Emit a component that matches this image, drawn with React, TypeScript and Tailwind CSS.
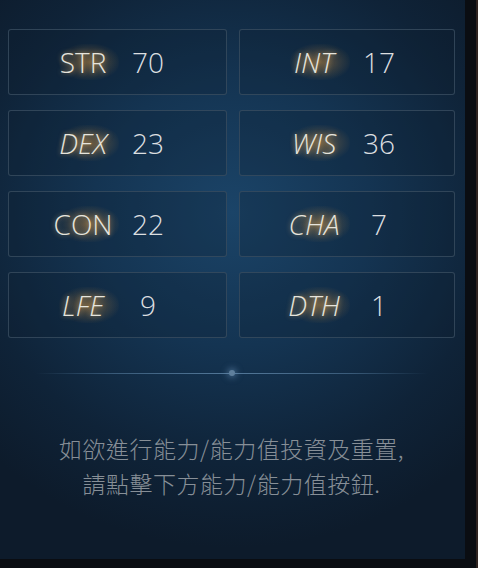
const stats = [
  { label: "STR", value: "70", italic: false },
  { label: "INT", value: "17", italic: true },
  { label: "DEX", value: "23", italic: true },
  { label: "WIS", value: "36", italic: true },
  { label: "CON", value: "22", italic: false },
  { label: "CHA", value: "7", italic: true },
  { label: "LFE", value: "9", italic: true },
  { label: "DTH", value: "1", italic: true },
];

function StatCard({ label, value, italic }: { label: string; value: string; italic: boolean }) {
  return (
    <div className="flex h-[66px] items-center rounded-[3px] border border-[#3a4d60]/80 bg-[#0a1a2b]/25 pl-[34px]">
      <div className="relative flex w-[80px] justify-center">
        <div className="absolute left-[58%] top-1/2 h-[36px] w-[60px] -translate-x-1/2 -translate-y-1/2 rounded-full bg-[radial-gradient(ellipse_at_center,rgba(200,140,60,0.5)_0%,rgba(200,140,60,0.18)_45%,rgba(200,140,60,0)_75%)]" />
        <span
          className={`relative text-[28px] font-light leading-none text-[#e6e4dc] [text-shadow:0_0_5px_rgba(255,205,130,0.5)] ${
            italic ? "italic" : ""
          }`}
        >
          {label}
        </span>
      </div>
      <span className="w-[50px] text-center text-[28px] font-light leading-none text-[#dcdfe0]">{value}</span>
    </div>
  );
}

export default function App() {
  return (
    <div className="flex h-[568px] w-[478px] bg-[#0a0d12] font-['Open_Sans','Noto_Sans',sans-serif]">
      <div className="flex h-[559px] w-[465px] flex-col bg-[radial-gradient(ellipse_75%_60%_at_50%_38%,#1b4468_0%,#143452_40%,#0f2338_75%,#0d1b2b_100%)] pl-[8px] pr-[10px] pt-[29px]">
        <div className="grid grid-cols-[219px_216px] gap-x-[12px] gap-y-[15px]">
          {stats.map((s) => (
            <StatCard key={s.label} {...s} />
          ))}
        </div>

        <div className="relative mt-[34px] flex h-[2px] items-center justify-center">
          <div className="h-px w-[392px] bg-[linear-gradient(90deg,rgba(90,130,165,0)_0%,rgba(90,130,165,0.55)_20%,rgba(110,150,185,0.7)_50%,rgba(90,130,165,0.55)_80%,rgba(90,130,165,0)_100%)]" />
          <div className="absolute left-1/2 top-1/2 h-[6px] w-[6px] -translate-x-1/2 -translate-y-1/2 rounded-full bg-[#5f7f9c] shadow-[0_0_6px_2px_rgba(110,150,190,0.5)]" />
        </div>

        <p className="mt-[57px] text-center font-['Noto_Sans_CJK_TC',sans-serif] text-[23px] font-light leading-[35px] tracking-[0.5px] text-[#878f97]">
          如欲進行能力/能力值投資及重置,
          <br />
          請點擊下方能力/能力值按鈕.
        </p>
      </div>
      <div className="flex h-full w-[13px] justify-end">
        <div className="h-full w-[2px] bg-[#2e2320]" />
      </div>
    </div>
  );
}
